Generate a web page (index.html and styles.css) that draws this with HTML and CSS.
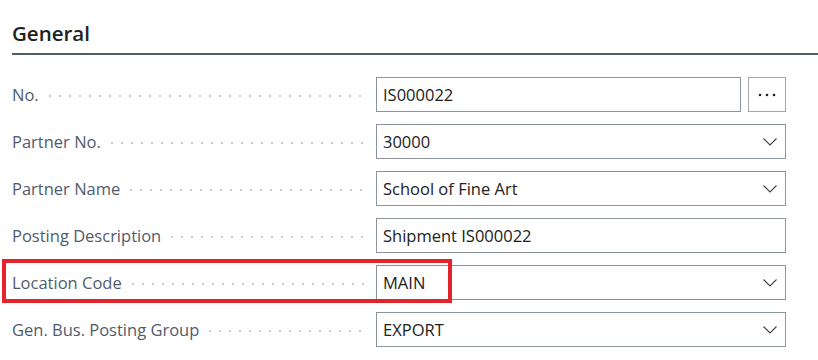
FILE: index.html
```html
<!DOCTYPE html>
<html lang="en">
<head>
    <meta charset="UTF-8">
    <title>General</title>
    <link rel="stylesheet" href="styles.css">
</head>
<body>
    <div class="section">
        <h2 class="section-title">General</h2>

        <div class="fields">
            <div class="field">
                <div class="label"><span>No.</span><span class="leader"></span></div>
                <div class="control">
                    <div class="input">IS000022</div>
                    <button class="assist">
                        <svg width="18" height="4" viewBox="0 0 18 4"><circle cx="2" cy="2" r="1.3"/><circle cx="9" cy="2" r="1.3"/><circle cx="16" cy="2" r="1.3"/></svg>
                    </button>
                </div>
            </div>

            <div class="field">
                <div class="label"><span>Partner No.</span><span class="leader"></span></div>
                <div class="control">
                    <div class="input select">30000<svg class="chevron" width="14" height="8" viewBox="0 0 14 8"><path d="M0.5 0.5 L7 7 L13.5 0.5"/></svg></div>
                </div>
            </div>

            <div class="field">
                <div class="label"><span>Partner Name</span><span class="leader"></span></div>
                <div class="control">
                    <div class="input select">School of Fine Art<svg class="chevron" width="14" height="8" viewBox="0 0 14 8"><path d="M0.5 0.5 L7 7 L13.5 0.5"/></svg></div>
                </div>
            </div>

            <div class="field">
                <div class="label"><span>Posting Description</span><span class="leader"></span></div>
                <div class="control">
                    <div class="input">Shipment IS000022</div>
                </div>
            </div>

            <div class="field highlighted">
                <div class="label"><span>Location Code</span><span class="leader"></span></div>
                <div class="control">
                    <div class="input select">MAIN<svg class="chevron" width="14" height="8" viewBox="0 0 14 8"><path d="M0.5 0.5 L7 7 L13.5 0.5"/></svg></div>
                </div>
                <div class="highlight-box"></div>
            </div>

            <div class="field">
                <div class="label"><span>Gen. Bus. Posting Group</span><span class="leader"></span></div>
                <div class="control">
                    <div class="input select">EXPORT<svg class="chevron" width="14" height="8" viewBox="0 0 14 8"><path d="M0.5 0.5 L7 7 L13.5 0.5"/></svg></div>
                </div>
            </div>
        </div>
    </div>
</body>
</html>
```

FILE: styles.css
```css
body {
    margin: 0;
    font-family: "Open Sans", "Noto Sans", sans-serif;
    background-color: white;
    overflow: hidden;
}
.section {
    padding-top: 18px;
}
.section-title {
    margin: 0 0 0 12px;
    font-size: 20.5px;
    font-weight: 600;
    color: #212121;
    line-height: 30px;
    padding-bottom: 5px;
    border-bottom: 2px solid #505c6d;
}
.fields {
    display: flex;
    flex-direction: column;
    gap: 12px;
    padding: 22px 32px 0 12px;
}
.field {
    display: grid;
    grid-template-columns: 364px 1fr;
    height: 35px;
    position: relative;
}
.label {
    display: flex;
    align-items: center;
    color: #505c6d;
    font-size: 16.5px;
    padding-right: 11px;
}
.leader {
    flex: 1;
    height: 2px;
    margin-left: 10px;
    margin-top: 3px;
    background-image: radial-gradient(circle, #c9c9c9 1px, transparent 1.2px);
    background-size: 10px 2px;
    background-position: -4px 0;
}
.control {
    display: flex;
    gap: 7px;
}
.input {
    flex: 1;
    box-sizing: border-box;
    border: 1px solid #8a939e;
    display: flex;
    align-items: center;
    padding: 0 6px;
    font-size: 16.5px;
    color: #212121;
}
.select {
    justify-content: space-between;
}
.chevron {
    fill: none;
    stroke: #3a4654;
    stroke-width: 1.1;
    margin-right: 2px;
    margin-top: 1px;
}
.assist {
    width: 38px;
    border: 1px solid #a6a6a6;
    background: white;
    display: flex;
    align-items: center;
    justify-content: center;
    padding: 0;
}
.assist svg {
    fill: #212121;
}
.highlight-box {
    position: absolute;
    left: -10px;
    top: -6px;
    width: 442px;
    height: 36px;
    border: 4px solid #e3242b;
}
```
